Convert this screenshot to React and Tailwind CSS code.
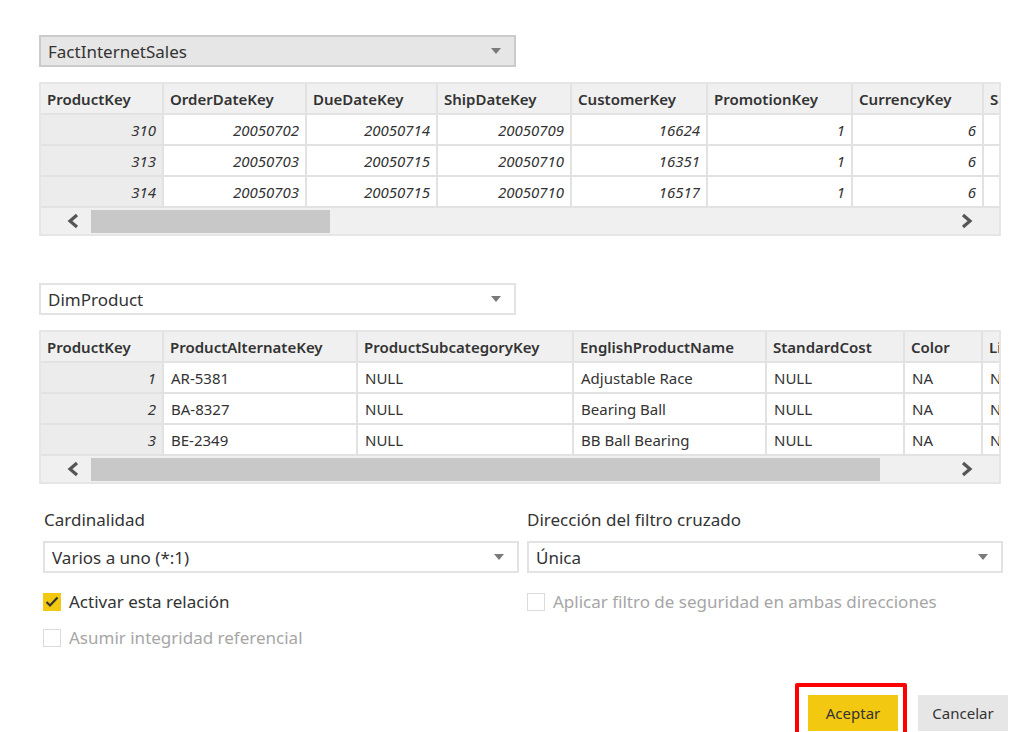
import React from 'react';

const font = { fontFamily: '"Segoe UI", "Noto Sans", "Open Sans", sans-serif' };

function Caret() {
  return (
    <svg width="10" height="6" viewBox="0 0 10 6" className="shrink-0">
      <path d="M0 0 L10 0 L5 6 Z" fill="#7a7a7a" />
    </svg>
  );
}

function Dropdown({ label, grey }) {
  return (
    <div
      className={`flex items-center justify-between h-[32px] border-2 pl-[7px] pr-[13px] text-[17px] text-[#333] ${
        grey ? 'bg-[#e6e6e6] border-[#cbcbcb]' : 'bg-white border-[#e3e3e3]'
      }`}
    >
      <span className="leading-none">{label}</span>
      <Caret />
    </div>
  );
}

function Chevron({ dir }) {
  return (
    <svg width="14" height="16" viewBox="0 0 14 16">
      <path
        d={dir === 'left' ? 'M11 2 L4 8 L11 14' : 'M3 2 L10 8 L3 14'}
        fill="none"
        stroke="#555"
        strokeWidth="3.2"
      />
    </svg>
  );
}

function DataTable({ columns, rows, thumb }) {
  return (
    <div className="w-[962px] border-2 border-[#e6e6e6] overflow-hidden">
      <div className="flex h-[31px] bg-[#f0f0f0] whitespace-nowrap">
        {columns.map((c, i) => (
          <div
            key={i}
            className="shrink-0 h-full flex items-center pl-[6px] pt-[1px] border-r-2 border-b-2 border-[#e2e2e2] font-semibold text-[15px] text-[#333] overflow-hidden"
            style={{ width: c.w }}
          >
            {c.name}
          </div>
        ))}
      </div>
      {rows.map((r, ri) => (
        <div key={ri} className="flex h-[31px] whitespace-nowrap">
          {r.map((v, ci) => {
            const col = columns[ci];
            const first = ci === 0;
            return (
              <div
                key={ci}
                className={`shrink-0 h-full flex items-center pt-[2px] border-r-2 border-b-2 border-[#e2e2e2] text-[15px] text-[#333] overflow-hidden ${
                  first ? 'bg-[#ececec]' : 'bg-white'
                } ${col.num ? 'justify-end pr-[6px] italic' : 'pl-[7px]'}`}
                style={{ width: col.w }}
              >
                {v}
              </div>
            );
          })}
        </div>
      ))}
      <div className="flex items-center h-[26px] bg-[#f0f0f0]">
        <div className="w-[50px] flex justify-center pl-[14px]">
          <Chevron dir="left" />
        </div>
        <div className={`h-[23px] bg-[#c8c8c8] ${thumb}`} />
        <div className="flex-1" />
        <div className="w-[40px] flex justify-start pl-[1px]">
          <Chevron dir="right" />
        </div>
      </div>
    </div>
  );
}

function Check({ checked, disabled, label }) {
  return (
    <div className="flex items-center gap-[8px] h-[20px]">
      {checked ? (
        <div className="w-[18px] h-[18px] bg-[#f2c811] flex items-center justify-center">
          <svg width="14" height="12" viewBox="0 0 14 12">
            <path d="M1.5 6 L5 9.5 L12.5 1.5" fill="none" stroke="#333" strokeWidth="2.2" />
          </svg>
        </div>
      ) : (
        <div className="w-[18px] h-[18px] border border-[#dcdcdc] bg-white" />
      )}
      <span className={`text-[17px] ${disabled ? 'text-[#a6a6a6]' : 'text-[#333]'}`}>{label}</span>
    </div>
  );
}

const factCols = [
  { name: 'ProductKey', w: 123, num: true },
  { name: 'OrderDateKey', w: 143, num: true },
  { name: 'DueDateKey', w: 131, num: true },
  { name: 'ShipDateKey', w: 134, num: true },
  { name: 'CustomerKey', w: 136, num: true },
  { name: 'PromotionKey', w: 145, num: true },
  { name: 'CurrencyKey', w: 131, num: true },
  { name: 'SalesTerritoryKey', w: 140, num: true },
];

const factRows = [
  ['310', '20050702', '20050714', '20050709', '16624', '1', '6', ''],
  ['313', '20050703', '20050715', '20050710', '16351', '1', '6', ''],
  ['314', '20050703', '20050715', '20050710', '16517', '1', '6', ''],
];

const dimCols = [
  { name: 'ProductKey', w: 123, num: true },
  { name: 'ProductAlternateKey', w: 194 },
  { name: 'ProductSubcategoryKey', w: 216 },
  { name: 'EnglishProductName', w: 193 },
  { name: 'StandardCost', w: 138 },
  { name: 'Color', w: 78 },
  { name: 'ListPrice', w: 120 },
];

const dimRows = [
  ['1', 'AR-5381', 'NULL', 'Adjustable Race', 'NULL', 'NA', 'NULL'],
  ['2', 'BA-8327', 'NULL', 'Bearing Ball', 'NULL', 'NA', 'NULL'],
  ['3', 'BE-2349', 'NULL', 'BB Ball Bearing', 'NULL', 'NA', 'NULL'],
];

export default function App() {
  return (
    <div className="w-[1030px] h-[732px] bg-white overflow-hidden" style={font}>
      <div className="pl-[39px] pt-[35px]">
        <div className="w-[477px]">
          <Dropdown label="FactInternetSales" grey />
        </div>
        <div className="mt-[15px]">
          <DataTable columns={factCols} rows={factRows} thumb="w-[239px]" />
        </div>
        <div className="w-[477px] mt-[47px]">
          <Dropdown label="DimProduct" />
        </div>
        <div className="mt-[15px]">
          <DataTable columns={dimCols} rows={dimRows} thumb="w-[789px]" />
        </div>

        <div className="flex mt-[24px] pl-[4px]">
          <div className="w-[484px] flex flex-col">
            <div className="pl-[1px] text-[17px] text-[#333] leading-[24px]">Cardinalidad</div>
            <div className="mt-[9px] w-[476px]">
              <Dropdown label="Varios a uno (*:1)" />
            </div>
            <div className="mt-[19px]">
              <Check checked label="Activar esta relación" />
            </div>
            <div className="mt-[16px]">
              <Check disabled label="Asumir integridad referencial" />
            </div>
          </div>
          <div className="w-[476px] flex flex-col">
            <div className="text-[17px] text-[#333] leading-[24px]">Dirección del filtro cruzado</div>
            <div className="mt-[9px]">
              <Dropdown label="Única" />
            </div>
            <div className="mt-[19px]">
              <Check disabled label="Aplicar filtro de seguridad en ambas direcciones" />
            </div>
          </div>
        </div>

        <div className="flex justify-end items-start mt-[35px] pr-[22px] gap-[11px]">
          <div className="border-[4px] border-[#ff0000] rounded-[2px] pt-[8px] pl-[9px] pr-[5px] h-[60px]">
            <button className="w-[90px] h-[36px] bg-[#f2c811] text-[15px] text-[#333]">Aceptar</button>
          </div>
          <button className="mt-[12px] w-[90px] h-[36px] bg-[#e6e6e6] text-[15px] text-[#333]">Cancelar</button>
        </div>
      </div>
    </div>
  );
}
